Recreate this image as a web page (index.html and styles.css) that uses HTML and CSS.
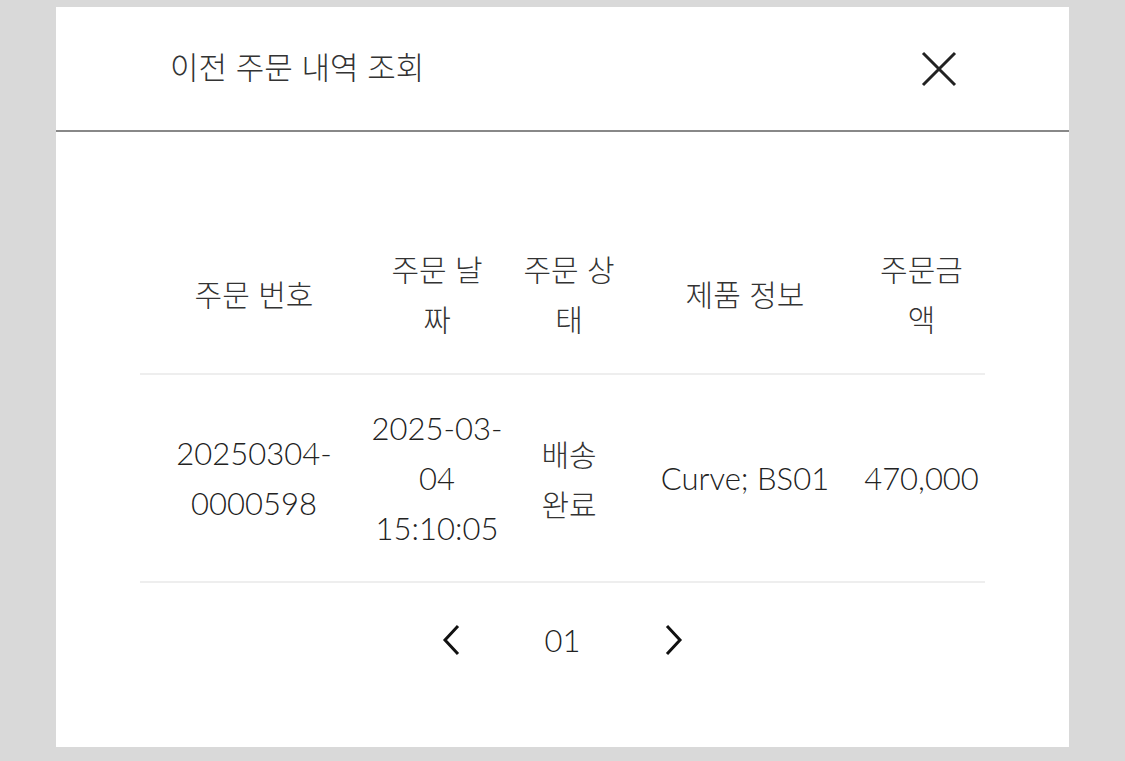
FILE: index.html
```html
<!DOCTYPE html>
<html lang="ko">
<head>
    <meta charset="UTF-8">
    <meta name="viewport" content="width=device-width, initial-scale=1.0">
    <title>이전 주문 내역 조회</title>
    <link rel="stylesheet" href="styles.css">
</head>
<body>
    <div class="modal">
        <div class="modal-header">
            <h2>이전 주문 내역 조회</h2>
            <button type="button" class="close-btn" aria-label="닫기">
                <svg width="36" height="36" viewBox="0 0 36 36">
                    <path d="M2 2 L34 34 M34 2 L2 34" stroke="#222" stroke-width="3" fill="none"/>
                </svg>
            </button>
        </div>

        <div class="modal-body">
            <table class="order-table">
                <colgroup>
                    <col class="col-no">
                    <col class="col-date">
                    <col class="col-status">
                    <col class="col-product">
                    <col class="col-price">
                </colgroup>
                <thead>
                    <tr>
                        <th>주문 번호</th>
                        <th>주문 날짜</th>
                        <th>주문 상태</th>
                        <th>제품 정보</th>
                        <th>주문금액</th>
                    </tr>
                </thead>
                <tbody>
                    <tr>
                        <td>20250304-<wbr>0000598</td>
                        <td>2025-03-<wbr>04 15:10:05</td>
                        <td class="status">배송 완료</td>
                        <td>Curve; BS01</td>
                        <td>470,000</td>
                    </tr>
                </tbody>
            </table>

            <div class="pagination">
                <button type="button" class="page-arrow" aria-label="이전">
                    <svg width="20" height="32" viewBox="0 0 20 32">
                        <polyline points="17,2 4,16 17,30" stroke="#111" stroke-width="3" fill="none"/>
                    </svg>
                </button>
                <span class="page-num">01</span>
                <button type="button" class="page-arrow" aria-label="다음">
                    <svg width="20" height="32" viewBox="0 0 20 32">
                        <polyline points="3,2 16,16 3,30" stroke="#111" stroke-width="3" fill="none"/>
                    </svg>
                </button>
            </div>
        </div>
    </div>
</body>
</html>
```

FILE: styles.css
```css
body {
    margin: 0;
    padding: 7px 56px 14px;
    background-color: #d9d9d9;
    font-family: Lato, "Noto Sans CJK KR", sans-serif;
    color: #333;
}
.modal {
    background-color: white;
    height: 740px;
    box-sizing: border-box;
}
.modal-header {
    display: flex;
    justify-content: space-between;
    align-items: center;
    height: 123px;
    padding: 0 112px 0 114px;
    border-bottom: 2px solid #888;
}
.modal-header h2 {
    margin: 0;
    font-family: "Noto Sans CJK KR", sans-serif;
    font-size: 31px;
    font-weight: 300;
    color: #333;
    padding-bottom: 6px;
}
.close-btn {
    background: none;
    border: none;
    padding: 0;
    cursor: pointer;
    display: flex;
}
.modal-body {
    padding: 85px 84px 0;
}
.order-table {
    width: 845px;
    border-collapse: collapse;
    table-layout: fixed;
}
.col-no { width: 228px; }
.col-date { width: 138px; }
.col-status { width: 126px; }
.col-product { width: 226px; }
.col-price { width: 127px; }
.order-table th,
.order-table td {
    text-align: center;
    vertical-align: middle;
    line-height: 50px;
    font-weight: 300;
    color: #333;
    border-bottom: 2px solid #eee;
}
.order-table th {
    padding: 26px 14px 30px;
    font-family: "Noto Sans CJK KR", sans-serif;
    font-size: 30px;
}
.order-table td {
    padding: 28px 0;
    font-size: 31px;
    color: #222;
}
.order-table td.status {
    padding: 28px 10px;
    font-family: "Noto Sans CJK KR", sans-serif;
    font-size: 30px;
    color: #333;
    word-break: keep-all;
}
.pagination {
    display: flex;
    justify-content: center;
    align-items: center;
    gap: 84px;
    margin-top: 38px;
}
.page-arrow {
    background: none;
    border: none;
    padding: 0;
    cursor: pointer;
    display: flex;
}
.page-num {
    font-size: 31px;
    font-weight: 300;
    color: #222;
}
```
